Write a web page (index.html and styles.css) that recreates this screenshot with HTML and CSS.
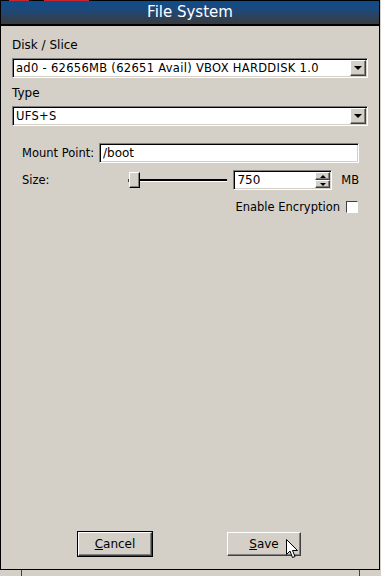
FILE: index.html
```html
<!DOCTYPE html>
<html lang="en">

<head>
    <meta charset="UTF-8">
    <meta name="viewport" content="width=device-width, initial-scale=1.0">
    <title>File System</title>

    <link rel="stylesheet" href="styles.css">
</head>

<body>
    <div class="window">
        <div class="titlebar">File System</div>

        <div class="content">
            <div class="label">Disk / Slice</div>
            <div class="combo">
                <span class="combo-text">ad0 - 62656MB (62651 Avail) VBOX HARDDISK 1.0</span>
                <span class="drop"><span class="arrow"></span></span>
            </div>

            <div class="label type-label">Type</div>
            <div class="combo">
                <span class="combo-text">UFS+S</span>
                <span class="drop"><span class="arrow"></span></span>
            </div>

            <div class="group">
                <div class="row">
                    <span class="row-label">Mount Point:</span>
                    <div class="field mount">/boot</div>
                </div>

                <div class="row size-row">
                    <span class="row-label size-label">Size:</span>
                    <div class="slider">
                        <span class="tick"></span>
                        <span class="handle"></span>
                        <span class="track"></span>
                    </div>
                    <div class="field spin">
                        <span class="spin-value">750</span>
                        <span class="spin-btns">
                            <span class="spin-btn"><span class="up"></span></span>
                            <span class="spin-btn"><span class="down"></span></span>
                        </span>
                    </div>
                    <span class="unit">MB</span>
                </div>

                <div class="row enc-row">
                    <span>Enable Encryption</span>
                    <span class="check"></span>
                </div>
            </div>
        </div>

        <div class="buttons">
            <div class="default-frame">
                <div class="button"><u>C</u>ancel</div>
            </div>
            <div class="button save"><u>S</u>ave
                <svg class="cursor" width="13" height="20" viewBox="0 0 13 20">
                    <path d="M0.5 0.5 L0.5 15.5 L4 12 L6.5 18.5 L9 17.5 L6.5 11.5 L11.5 11.5 Z" fill="#fff" stroke="#000" stroke-width="1"/>
                </svg>
            </div>
        </div>
    </div>
    <div class="desk">
        <span class="desk-line"></span>
        <span class="desk-line"></span>
    </div>
</body>

</html>
```

FILE: styles.css
```css
* {
    margin: 0;
    padding: 0;
    box-sizing: border-box;
}

body {
    width: 381px;
    height: 576px;
    overflow: hidden;
    background: #d4d0c8;
    font-family: "DejaVu Sans", sans-serif;
    font-size: 12px;
    color: #000;
}

.window {
    width: 380px;
    height: 570px;
    display: flex;
    flex-direction: column;
    background: #d4d0c8;
    border-left: 1px solid #000;
    border-right: 1px solid #000;
    border-bottom: 1px solid #000;
}

/* top pixel row shows bits of the desktop behind the window */
.titlebar {
    height: 26px;
    padding-top: 1px;
    border-bottom: 2px solid #000;
    background:
        linear-gradient(to right, #000 8px, #c9252b 8px 28px, #000 28px 43px, #c9252b 43px 88px, #000 88px) top / 100% 1px no-repeat,
        linear-gradient(#0d4c8d, #1f4878 45%, #3b3b3b);
    color: #fff;
    font-size: 15px;
    line-height: 23px;
    text-align: center;
}

.content {
    flex: 1;
    display: flex;
    flex-direction: column;
    padding: 12px 11px 0 11px;
}

.label {
    line-height: 14px;
    margin-bottom: 6px;
}

.type-label {
    margin-top: 8px;
}

.combo {
    height: 20px;
    display: flex;
    align-items: center;
    background: #fff;
    border-top: 1px solid #808080;
    border-left: 1px solid #808080;
    border-right: 1px solid #fff;
    border-bottom: 1px solid #fff;
    box-shadow: inset 1px 1px 0 #000, inset -1px -1px 0 #d4d0c8;
    padding: 1px;
}

.combo-text {
    flex: 1;
    padding-left: 2px;
    font-size: 11.5px;
    letter-spacing: 0.3px;
    line-height: 16px;
    white-space: nowrap;
    overflow: hidden;
}

.drop,
.spin-btn {
    display: flex;
    align-items: center;
    justify-content: center;
    background: #d4d0c8;
    border-top: 1px solid #fff;
    border-left: 1px solid #fff;
    border-right: 1px solid #404040;
    border-bottom: 1px solid #404040;
    box-shadow: inset -1px -1px 0 #808080;
}

.drop {
    width: 16px;
    height: 16px;
}

.arrow,
.down {
    width: 0;
    height: 0;
    border-left: 4px solid transparent;
    border-right: 4px solid transparent;
    border-top: 4px solid #000;
}

.up {
    width: 0;
    height: 0;
    border-left: 3px solid transparent;
    border-right: 3px solid transparent;
    border-bottom: 3px solid #000;
}

.spin-btn .down {
    border-left-width: 3px;
    border-right-width: 3px;
    border-top-width: 3px;
}

.group {
    display: flex;
    flex-direction: column;
    padding: 17px 9px 0 10px;
    font-size: 11.5px;
}

.row {
    display: flex;
    align-items: center;
    height: 20px;
}

.row-label {
    width: 77px;
}

.field {
    height: 20px;
    background: #fff;
    border-top: 1px solid #808080;
    border-left: 1px solid #808080;
    border-right: 1px solid #fff;
    border-bottom: 1px solid #fff;
    box-shadow: inset 1px 1px 0 #000, inset -1px -1px 0 #d4d0c8;
    font-size: 12px;
    line-height: 18px;
    padding-left: 3px;
}

.mount {
    flex: 1;
}

.size-row {
    margin-top: 7px;
}

.size-label {
    width: 106px;
}

.slider {
    width: 100px;
    height: 16px;
    display: flex;
    align-items: center;
}

.tick {
    width: 1px;
    height: 3px;
    background: #404040;
}

.handle {
    width: 11px;
    height: 16px;
    background: #d4d0c8;
    border-top: 1px solid #fff;
    border-left: 1px solid #fff;
    border-right: 1px solid #000;
    border-bottom: 1px solid #000;
    box-shadow: inset -1px -1px 0 #808080;
}

.track {
    flex: 1;
    height: 3px;
    border-top: 2px solid #000;
    border-bottom: 1px solid #fff;
}

.spin {
    width: 99px;
    margin-left: 6px;
    display: flex;
    align-items: center;
    padding: 1px 1px 1px 3px;
}

.spin-value {
    flex: 1;
    line-height: 16px;
}

.spin-btns {
    display: flex;
    flex-direction: column;
    width: 15px;
    height: 16px;
}

.spin-btn {
    flex: 1;
}

.unit {
    margin-left: 9px;
}

.enc-row {
    justify-content: flex-end;
    gap: 6px;
    margin-top: 10px;
    height: 14px;
    padding-right: 1px;
}

.check {
    width: 12px;
    height: 12px;
    background: #fff;
    border-top: 1px solid #404040;
    border-left: 1px solid #404040;
    border-right: 1px solid #fff;
    border-bottom: 1px solid #fff;
    box-shadow: 1px 1px 0 #d4d0c8;
}

.buttons {
    display: flex;
    align-items: center;
    padding-left: 76px;
    margin-bottom: 12px;
}

.default-frame {
    border: 1px solid #000;
}

.button {
    position: relative;
    width: 74px;
    height: 24px;
    display: flex;
    align-items: center;
    justify-content: center;
    background: #d4d0c8;
    border-top: 1px solid #fff;
    border-left: 1px solid #fff;
    border-right: 1px solid #404040;
    border-bottom: 1px solid #404040;
    box-shadow: inset -1px -1px 0 #808080;
}

.save {
    margin-left: 74px;
}

.cursor {
    position: absolute;
    left: 58px;
    top: 6px;
}

.desk {
    height: 6px;
    display: flex;
    justify-content: space-between;
    padding: 0 21px;
    background: #d4d0c8;
}

.desk-line {
    width: 1px;
    background: #404040;
}
```
